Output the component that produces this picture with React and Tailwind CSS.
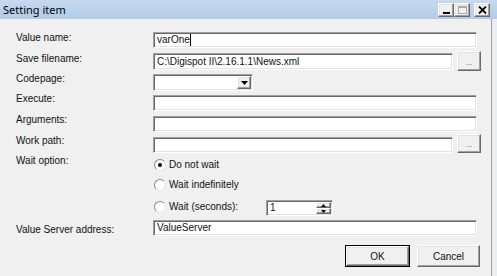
// App.jsx — "Setting item" dialog (Windows classic look)

const sunken =
  'bg-white border border-t-[#a0a0a0] border-l-[#a0a0a0] border-b-white border-r-white shadow-[inset_1px_1px_0_#696969,inset_-1px_-1px_0_#e3e3e3]'
const raised =
  'bg-[#f0f0f0] border border-t-white border-l-white border-b-[#696969] border-r-[#696969] shadow-[inset_-1px_-1px_0_#a0a0a0,inset_1px_1px_0_#e3e3e3]'

function Label({ children, offset }) {
  return (
    <div className={`w-[137px] shrink-0 self-start leading-[13px] ${offset}`}>{children}</div>
  )
}

function TextBox({ value, width = 'w-[324px]', extra = '' }) {
  return (
    <div className={`${sunken} ${width} h-[16px] flex items-center pl-[3px] leading-[12px] ${extra}`}>
      {value}
    </div>
  )
}

function DotsButton({ extra = '' }) {
  return (
    <div className={`${raised} ml-[4px] w-[24px] h-full flex items-end justify-center pb-[3px] text-[8px] leading-[8px] text-[#555] ${extra}`}>
      ...
    </div>
  )
}

function Radio({ checked, label }) {
  return (
    <div className="flex items-center h-[13px]">
      <div className="w-[12px] h-[12px] rounded-full bg-white border border-t-[#8a8a8a] border-l-[#8a8a8a] border-b-[#e6e6e6] border-r-[#e6e6e6] flex items-center justify-center ml-[1px]">
        {checked && <div className="w-[4px] h-[4px] rounded-full bg-black" />}
      </div>
      <span className="ml-[2px] pl-[1px]">{label}</span>
    </div>
  )
}

function WinButton({ children }) {
  return (
    <div className={`${raised} w-[16px] h-[14px] flex items-center justify-center`}>{children}</div>
  )
}

export default function App() {
  return (
    <div className="w-[497px] h-[276px] overflow-hidden flex flex-col bg-[#f0f0f0] text-[#111] font-['Liberation_Sans',Arial,sans-serif] text-[10px]">
      {/* Title bar */}
      <div className="h-[19px] shrink-0 flex items-center bg-gradient-to-b from-[#c6daf0] to-[#b2cbe7] pl-[3px] pr-[7px]">
        <span className="font-['Noto_Sans',sans-serif] text-[11px] leading-[16px] text-black">Setting item</span>
        <div className="ml-auto flex items-center">
          <WinButton>
            <div className="w-[7px] h-[2px] bg-black mt-[6px]" />
          </WinButton>
          <WinButton>
            <div className="w-[9px] h-[8px] border border-[#a8a8a8] border-t-2" />
          </WinButton>
          <div className="ml-[4px]">
            <WinButton>
              <svg width="9" height="8" viewBox="0 0 9 8">
                <path d="M1 0.5 L8 7.5 M8 0.5 L1 7.5" stroke="#000" strokeWidth="1.8" />
              </svg>
            </WinButton>
          </div>
        </div>
      </div>

      <div className="flex-1 flex">
        {/* Client area */}
        <div className="flex-1 flex flex-col pl-[16px] pt-[13px]">
          <div className="flex h-[16px]">
            <Label offset="-mt-[1px]">Value name:</Label>
            <TextBox value={<span>varOne<span className="inline-block w-px h-[12px] bg-black align-middle" /></span>} />
          </div>

          <div className="flex h-[20px] mt-[3px]">
            <Label offset="mt-[1px]">Save filename:</Label>
            <TextBox value="C:\Digispot II\2.16.1.1\News.xml" width="w-[300px]" extra="mt-[2px] h-[17px]" />
            <DotsButton />
          </div>

          <div className="flex h-[17px] mt-[3px]">
            <Label offset="-mt-[2px]">Codepage:</Label>
            <div className={`${sunken} w-[100px] h-[17px] flex justify-end items-center pr-[1px]`}>
              <div className={`${raised} w-[14px] h-[13px] flex items-center justify-center`}>
                <svg width="7" height="4" viewBox="0 0 7 4">
                  <path d="M0 0 H7 L3.5 4 Z" fill="#000" />
                </svg>
              </div>
            </div>
          </div>

          <div className="flex h-[16px] mt-[4px]">
            <Label offset="-mt-[3px]">Execute:</Label>
            <TextBox value="" />
          </div>

          <div className="flex h-[16px] mt-[5px]">
            <Label offset="-mt-[3px]">Arguments:</Label>
            <TextBox value="" />
          </div>

          <div className="flex h-[19px] mt-[2px]">
            <Label offset="mt-0">Work path:</Label>
            <TextBox value="" width="w-[300px]" extra="mt-[3px]" />
            <DotsButton />
          </div>

          <div className="flex h-[14px] mt-[5px]">
            <Label offset="-mt-[4px]">Wait option:</Label>
            <Radio checked label="Do not wait" />
          </div>

          <div className="flex h-[14px] mt-[6px]">
            <div className="w-[137px] shrink-0" />
            <Radio label="Wait indefinitely" />
          </div>

          <div className="flex h-[16px] mt-[8px]">
            <div className="w-[137px] shrink-0" />
            <div className="w-[113px] shrink-0">
              <Radio label="Wait (seconds):" />
            </div>
            <div className={`${sunken} w-[67px] h-[16px] flex items-center pl-[3px]`}>
              <span className="leading-[12px]">1</span>
              <div className="ml-auto mr-[1px] flex flex-col">
                <div className={`${raised} w-[15px] h-[6px] flex items-center justify-center`}>
                  <svg width="5" height="3" viewBox="0 0 5 3"><path d="M0 3 H5 L2.5 0 Z" fill="#000" /></svg>
                </div>
                <div className={`${raised} w-[15px] h-[6px] flex items-center justify-center`}>
                  <svg width="5" height="3" viewBox="0 0 5 3"><path d="M0 0 H5 L2.5 3 Z" fill="#000" /></svg>
                </div>
              </div>
            </div>
          </div>

          <div className="flex h-[16px] mt-[4px]">
            <Label offset="mt-[3px]">Value Server address:</Label>
            <TextBox value="ValueServer" />
          </div>

          <div className="flex h-[22px] mt-[9px] justify-end pr-[11px] gap-[7px]">
            <div className="border border-black w-[65px] h-[22px]">
              <div className={`${raised} w-full h-full flex items-center justify-center`}>OK</div>
            </div>
            <div className={`${raised} w-[63px] h-[22px] flex items-center justify-center`}>Cancel</div>
          </div>
        </div>

        {/* Right window frame */}
        <div className="w-[6px] shrink-0 border-l border-[#a0a0a0] bg-[#e9eef4]" />
      </div>
    </div>
  )
}
